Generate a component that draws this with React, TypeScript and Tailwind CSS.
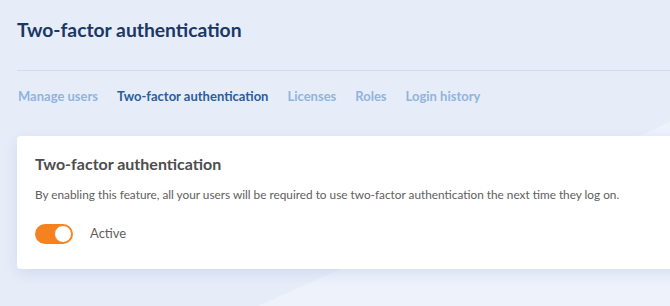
import React from "react";

export default function App() {
  const tabs = ["Manage users", "Two-factor authentication", "Licenses", "Roles", "Login history"];
  return (
    <div
      className="relative w-[670px] h-[306px] overflow-hidden bg-[#e7edf8]"
      style={{ fontFamily: "Lato, 'Open Sans', sans-serif" }}
    >
      <svg className="absolute inset-0" width="670" height="306" viewBox="0 0 670 306">
        <polygon points="258,306 670,122 670,306" fill="#eef2fb" />
      </svg>
      <div className="relative pl-[17px] pt-[17px]">
        <h1 className="text-[19.3px] font-bold text-[#1a3766] leading-[26px] h-[26px]">
          Two-factor authentication
        </h1>
        <div className="mt-[27px] h-px bg-[#d3dcea] w-[700px]" />
        <div className="flex gap-[19px] pl-px mt-[16px] text-[13px] font-bold leading-[18px]">
          {tabs.map((t, i) => (
            <span key={t} className={i === 1 ? "text-[#2a5d9b]" : "text-[#8fb4de]"}>
              {t}
            </span>
          ))}
        </div>
        <div className="mt-[31px] w-[700px] h-[133px] bg-white rounded-[4px] shadow-[0_4px_14px_rgba(140,165,215,0.25)] pl-[18px] pt-[17px]">
          <h2 className="text-[16px] font-bold text-[#4d4d4d] leading-[22px]">Two-factor authentication</h2>
          <p className="mt-[11px] text-[11.8px] text-[#606060] leading-[18px]">
            By enabling this feature, all your users will be required to use two-factor authentication the next time they log on.
          </p>
          <div className="mt-[20px] flex items-center gap-[17px]">
            <div className="relative w-[38px] h-[20px] rounded-full bg-[#f5821f]">
              <div className="absolute right-px top-px w-[18px] h-[18px] rounded-full bg-white border border-[#f5821f]" />
            </div>
            <span className="text-[13px] text-[#5f5f5f]">Active</span>
          </div>
        </div>
      </div>
    </div>
  );
}
